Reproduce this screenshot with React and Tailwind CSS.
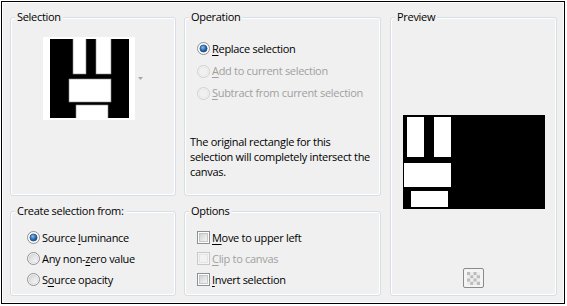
import React from "react";

function Radio({ checked, disabled, id }) {
  return (
    <svg width="13" height="13" viewBox="0 0 13 13" className="shrink-0">
      <defs>
        <linearGradient id={`rf${id}`} x1="0" y1="0" x2="1" y2="1">
          <stop offset="0" stopColor="#d2d4d6" />
          <stop offset="1" stopColor="#fbfbfb" />
        </linearGradient>
        <radialGradient id={`rd${id}`} cx="0.4" cy="0.35" r="0.7">
          <stop offset="0" stopColor="#8ac0ec" />
          <stop offset="0.55" stopColor="#2f6fb5" />
          <stop offset="1" stopColor="#163f78" />
        </radialGradient>
      </defs>
      <circle
        cx="6.5"
        cy="6.5"
        r="6"
        fill={disabled ? "#f4f4f4" : "#ffffff"}
        stroke={disabled ? "#cfcfcf" : "#8e8f8f"}
        strokeWidth="1"
      />
      {!checked && (
        <circle
          cx="6.5"
          cy="6.5"
          r="4.5"
          fill={disabled ? "#f0f0f0" : `url(#rf${id})`}
          stroke={disabled ? "#e2e2e2" : "#c7cacd"}
          strokeWidth="0.7"
        />
      )}
      {checked && (
        <circle cx="6.5" cy="6.5" r="3.6" fill={`url(#rd${id})`} stroke="#1b4a86" strokeWidth="0.7" />
      )}
    </svg>
  );
}

function Check({ disabled, id }) {
  return (
    <svg width="13" height="13" viewBox="0 0 13 13" className="shrink-0">
      <defs>
        <linearGradient id={`cf${id}`} x1="0" y1="0" x2="1" y2="1">
          <stop offset="0" stopColor="#cdcfd1" />
          <stop offset="1" stopColor="#f7f7f7" />
        </linearGradient>
      </defs>
      <rect
        x="0.5"
        y="0.5"
        width="12"
        height="12"
        fill={disabled ? "#f4f4f4" : "#ffffff"}
        stroke={disabled ? "#c9c9c9" : "#8e8f8f"}
      />
      <rect
        x="2.5"
        y="2.5"
        width="8"
        height="8"
        fill={disabled ? "#f2f2f2" : `url(#cf${id})`}
        stroke={disabled ? "#e0e0e0" : "#b9bcbf"}
        strokeWidth="0.8"
      />
    </svg>
  );
}

function Group({ title, className, children }) {
  return (
    <fieldset
      className={`border border-[#d5dfe5] rounded-[3px] shadow-[inset_1px_1px_0_#ffffff,inset_-1px_-1px_0_#ffffff] ${className}`}
    >
      <legend className="ml-[4px] px-[2px] leading-[16px] bg-[#f0f0f0] text-black">{title}</legend>
      {children}
    </fieldset>
  );
}

function U({ children }) {
  return <span className="underline underline-offset-[2px] decoration-1">{children}</span>;
}

function RadioRow({ checked, disabled, id, h, children }) {
  return (
    <div className={`flex items-center gap-[2px] ${h}`}>
      <Radio checked={checked} disabled={disabled} id={id} />
      <span className={`whitespace-nowrap ${disabled ? "text-[#a0a0a0]" : "text-black"}`}>{children}</span>
    </div>
  );
}

function CheckRow({ disabled, id, children }) {
  return (
    <div className="flex items-center gap-[2px] h-[21px]">
      <Check disabled={disabled} id={id} />
      <span className={`whitespace-nowrap ${disabled ? "text-[#a0a0a0]" : "text-black"}`}>{children}</span>
    </div>
  );
}

export default function App() {
  return (
    <div className="w-[567px] h-[306px] bg-white pt-px pl-px font-['Open_Sans',sans-serif] text-[11px] leading-[16px] tracking-[-0.3px]">
      <div className="w-[564px] h-[303px] border border-black">
        <div className="w-full h-full border border-white bg-[#f0f0f0] pt-[6px] pl-[7px] flex">
          {/* Column 1 */}
          <div className="flex flex-col w-[166px] gap-[7px]">
            <Group title="Selection" className="h-[187px]">
              <div className="flex items-center mt-[12px] ml-[32px] gap-[3px]">
                <div className="w-[92px] h-[83px] bg-white flex items-center justify-center">
                  <svg width="79" height="79" viewBox="0 0 79 79">
                    <rect x="0" y="0" width="79" height="79" fill="#000" />
                    <g fill="#fff" stroke="#8a8a8a" strokeWidth="0.6">
                      <rect x="23" y="-1" width="13" height="36" />
                      <rect x="46" y="-1" width="15" height="36" />
                      <rect x="19" y="40" width="42" height="23" />
                      <rect x="26" y="66" width="32" height="14" />
                    </g>
                  </svg>
                </div>
                <svg width="5" height="3" viewBox="0 0 5 3">
                  <polygon points="0,0 5,0 2.5,3" fill="#a8a8a8" />
                </svg>
              </div>
            </Group>
            <Group title="Create selection from:" className="h-[93px]">
              <div className="mt-[8px] pl-[16px] flex flex-col">
                <RadioRow checked id="c1" h="h-[21px]">
                  Source <U>l</U>uminance
                </RadioRow>
                <RadioRow id="c2" h="h-[21px]">
                  Any non-<U>z</U>ero value
                </RadioRow>
                <RadioRow id="c3" h="h-[21px]">
                  S<U>o</U>urce opacity
                </RadioRow>
              </div>
            </Group>
          </div>

          {/* Column 2 */}
          <div className="flex flex-col w-[197px] gap-[7px] ml-[8px]">
            <Group title="Operation" className="h-[187px]">
              <div className="mt-[12px] pl-[12px] flex flex-col">
                <RadioRow checked id="o1" h="h-[23px]">
                  <U>R</U>eplace selection
                </RadioRow>
                <RadioRow disabled id="o2" h="h-[22px]">
                  <U>A</U>dd to current selection
                </RadioRow>
                <RadioRow disabled id="o3" h="h-[22px]">
                  <U>S</U>ubtract from current selection
                </RadioRow>
              </div>
              <p className="mt-[30px] pl-[5px] leading-[15px] text-black whitespace-nowrap">
                The original rectangle for this
                <br />
                selection will completely intersect the
                <br />
                canvas.
              </p>
            </Group>
            <Group title="Options" className="h-[93px]">
              <div className="mt-[8px] pl-[12px] flex flex-col">
                <CheckRow id="k1">
                  <U>M</U>ove to upper left
                </CheckRow>
                <CheckRow disabled id="k2">
                  <U>C</U>lip to canvas
                </CheckRow>
                <CheckRow id="k3">
                  <U>I</U>nvert selection
                </CheckRow>
              </div>
            </Group>
          </div>

          {/* Column 3 */}
          <div className="w-[167px] ml-[9px]">
            <Group title="Preview" className="h-[287px]">
              <div className="flex flex-col items-center">
                <svg width="142" height="94" viewBox="0 0 142 94" className="mt-[90px]">
                  <rect x="0" y="0" width="142" height="94" fill="#000" />
                  <g fill="#fff">
                    <rect x="4" y="2" width="17" height="40" />
                    <rect x="31" y="2" width="17" height="40" />
                    <rect x="1" y="48" width="47" height="24" />
                    <rect x="8" y="76" width="37" height="16" />
                  </g>
                </svg>
                <div className="mt-[59px] w-[21px] h-[20px] rounded-[2px] border border-[#8a8a8a] bg-[#f4f4f4] flex items-center justify-center">
                  <svg width="13" height="13" viewBox="0 0 4 4">
                    {[0, 1, 2, 3].map((r) =>
                      [0, 1, 2, 3].map((c) => (
                        <rect
                          key={`${r}-${c}`}
                          x={c}
                          y={r}
                          width="1"
                          height="1"
                          fill={(r + c) % 2 === 0 ? "#bcbcbc" : "#ececec"}
                        />
                      ))
                    )}
                  </svg>
                </div>
              </div>
            </Group>
          </div>
        </div>
      </div>
    </div>
  );
}
